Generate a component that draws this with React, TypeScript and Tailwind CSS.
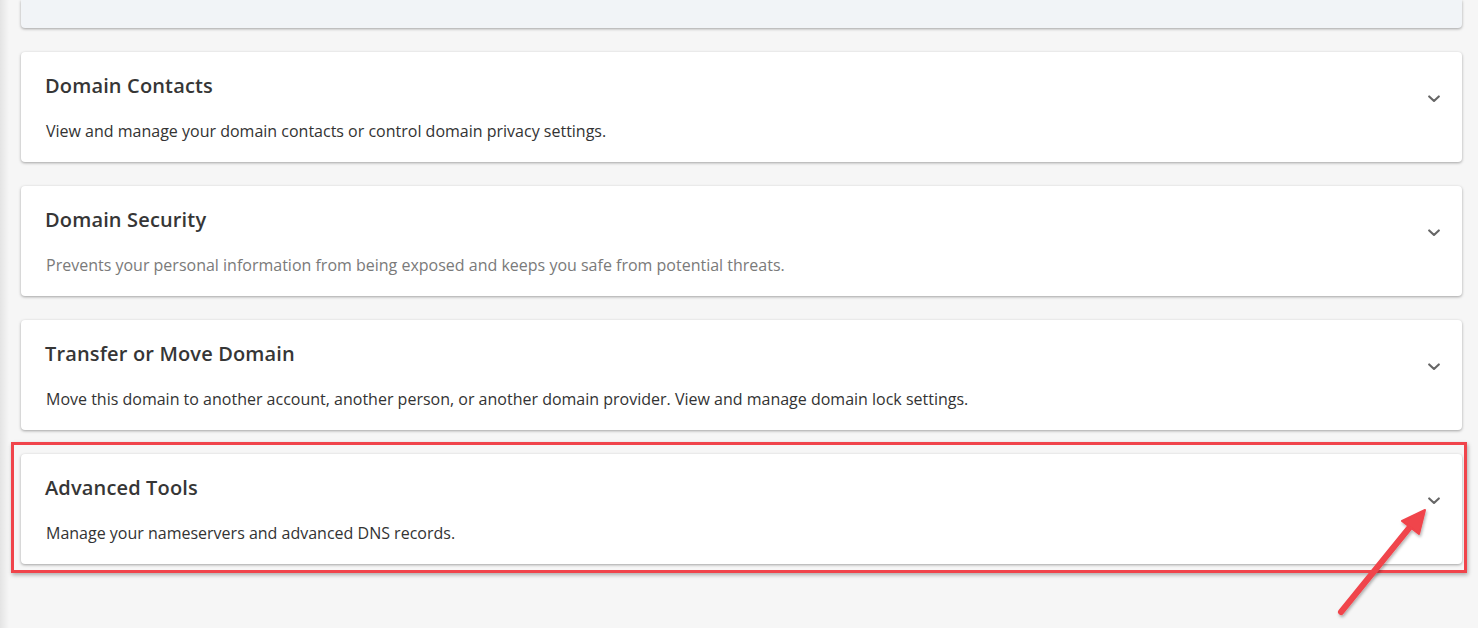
import React from "react";

const sections = [
  {
    title: "Domain Contacts",
    text: "View and manage your domain contacts or control domain privacy settings.",
    muted: false,
  },
  {
    title: "Domain Security",
    text: "Prevents your personal information from being exposed and keeps you safe from potential threats.",
    muted: true,
  },
  {
    title: "Transfer or Move Domain",
    text: "Move this domain to another account, another person, or another domain provider. View and manage domain lock settings.",
    muted: false,
  },
  {
    title: "Advanced Tools",
    text: "Manage your nameservers and advanced DNS records.",
    muted: false,
  },
];

const Chevron = () => (
  <svg width="12" height="8" viewBox="0 0 12 8" fill="none">
    <path d="M1.2 1.4l4.8 4.6 4.8-4.6" stroke="#666666" strokeWidth="2.1" strokeLinecap="round" strokeLinejoin="round" />
  </svg>
);

const Card = ({ title, text, muted }: { title: string; text: string; muted: boolean }) => (
  <div className="flex h-[110px] rounded-[4px] bg-white shadow-[0_1px_3px_rgba(0,0,0,0.35)]">
    <div className="flex-1 pl-[24px] pt-[20px]">
      <h3 className="text-[20px] font-semibold leading-[28px] tracking-[0.15px] text-[#363636]">{title}</h3>
      <p className={`mt-[19px] pl-px text-[16px] leading-[24px] ${muted ? "text-[#7a7a7a]" : "text-[#333333]"}`}>
        {text}
      </p>
    </div>
    <div className="flex w-[56px] justify-center pt-[43px]">
      <div className="h-[8px]">
        <Chevron />
      </div>
    </div>
  </div>
);

export default function App() {
  return (
    <div
      className="relative flex h-[628px] w-full overflow-hidden bg-[#f6f6f6]"
      style={{ fontFamily: '"Open Sans", "Noto Sans", sans-serif' }}
    >
      {/* left edge shade */}
      <div className="w-[9px] shrink-0 bg-gradient-to-r from-[#e4e4e4] to-[#f6f6f6]" />

      <div className="flex flex-1 flex-col gap-[24px] pl-[12px] pr-[16px]">
        <div className="h-[28px] rounded-b-[4px] bg-[#f1f4f7] shadow-[0_1px_3px_rgba(0,0,0,0.35)]" />
        {sections.map((s) => (
          <Card key={s.title} {...s} />
        ))}
      </div>

      {/* annotation box */}
      <div className="absolute left-[11px] top-[442px] h-[131px] w-[1456px] border-[3px] border-[#f0444b] shadow-[1px_2px_4px_rgba(0,0,0,0.3)]" />

      {/* annotation arrow */}
      <svg className="absolute left-0 top-0" width="1478" height="628" viewBox="0 0 1478 628">
        <defs>
          <filter id="sh" x="-20%" y="-20%" width="140%" height="140%">
            <feDropShadow dx="1" dy="2" stdDeviation="1.5" floodColor="#000" floodOpacity="0.3" />
          </filter>
        </defs>
        <g filter="url(#sh)">
          <line x1="1341" y1="612" x2="1410" y2="527" stroke="#f0444b" strokeWidth="6" strokeLinecap="round" />
          <polygon points="1425,510 1402,521 1419,534" fill="#f0444b" stroke="#f0444b" strokeWidth="2" strokeLinejoin="round" />
        </g>
      </svg>
    </div>
  );
}
